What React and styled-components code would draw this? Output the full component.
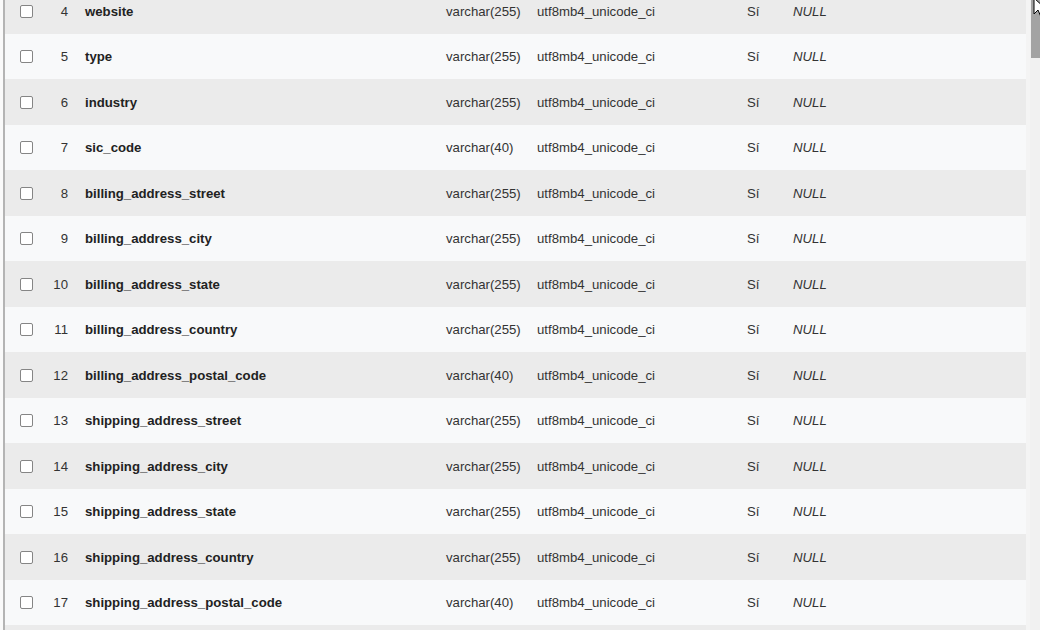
import React from 'react'
import styled, { createGlobalStyle } from 'styled-components'

const columns = [
  [4, 'website', 'varchar(255)'],
  [5, 'type', 'varchar(255)'],
  [6, 'industry', 'varchar(255)'],
  [7, 'sic_code', 'varchar(40)'],
  [8, 'billing_address_street', 'varchar(255)'],
  [9, 'billing_address_city', 'varchar(255)'],
  [10, 'billing_address_state', 'varchar(255)'],
  [11, 'billing_address_country', 'varchar(255)'],
  [12, 'billing_address_postal_code', 'varchar(40)'],
  [13, 'shipping_address_street', 'varchar(255)'],
  [14, 'shipping_address_city', 'varchar(255)'],
  [15, 'shipping_address_state', 'varchar(255)'],
  [16, 'shipping_address_country', 'varchar(255)'],
  [17, 'shipping_address_postal_code', 'varchar(40)'],
]

const Global = createGlobalStyle`
  html, body {
    margin: 0;
    padding: 0;
    overflow: hidden;
    background: #fff;
  }
  body {
    font-family: "Liberation Sans", Arial, sans-serif;
    font-size: 13.2px;
    color: #333;
  }
`

const Page = styled.div`
  display: flex;
  height: 630px;
  overflow: hidden;
  position: relative;
`

const LeftEdge = styled.div`
  width: 3px;
  background: #fafafa;
  border-right: 2px solid #b4b4b4;
  flex: none;
`

const Viewport = styled.div`
  flex: 1;
  overflow: hidden;
  background: #f4f4f4;
`

const Table = styled.div`
  margin-top: -12px;
  width: 1021px;
`

const Row = styled.div`
  display: grid;
  grid-template-columns: 41px 22px 378px 91px 210px 46px 1fr;
  align-items: center;
  height: 45.5px;
  padding-top: 1px;
  box-sizing: border-box;
  background: ${p => (p.$odd ? '#f8f9fa' : '#ebebeb')};
`

const Cell = styled.div`
  white-space: nowrap;
  color: #333;
`

const Num = styled(Cell)`
  text-align: right;
`

const Name = styled(Cell)`
  padding-left: 17px;
  font-weight: bold;
  color: #222;
`

const Default = styled(Cell)`
  font-style: italic;
`

const Check = styled.span`
  display: block;
  width: 11px;
  height: 11px;
  margin-left: 15px;
  border: 1px solid #858585;
  border-radius: 2px;
  background: #fff;
`

const Gutter = styled.div`
  width: 4px;
  flex: none;
  background: #f4f4f4;
`

const Scrollbar = styled.div`
  width: 10px;
  flex: none;
  background: #f1f1f1;
  display: flex;
  flex-direction: column;
`

const Thumb = styled.div`
  height: 58px;
  margin-left: 1px;
  background: #a3a3a3;
`

const Cursor = styled.svg`
  position: absolute;
  top: -3px;
  left: 1033px;
`

const App = () => {
  return (
    <>
      <Global />
      <Page>
        <LeftEdge />
        <Viewport>
          <Table>
            {columns.map(([n, name, type], i) => (
              <Row key={n} $odd={i % 2 === 1}>
                <div><Check /></div>
                <Num>{n}</Num>
                <Name>{name}</Name>
                <Cell>{type}</Cell>
                <Cell>utf8mb4_unicode_ci</Cell>
                <Cell>Sí</Cell>
                <Default>NULL</Default>
              </Row>
            ))}
            <Row />
          </Table>
        </Viewport>
        <Gutter />
        <Scrollbar>
          <Thumb />
        </Scrollbar>
        <Cursor width="14" height="22" viewBox="0 0 14 22">
          <path d="M1 1 L1 17 L5 13 L8 20 L10.5 19 L7.5 12 L13 12 Z" fill="#fff" stroke="#000" strokeWidth="1" />
        </Cursor>
      </Page>
    </>
  )
}

export default App
